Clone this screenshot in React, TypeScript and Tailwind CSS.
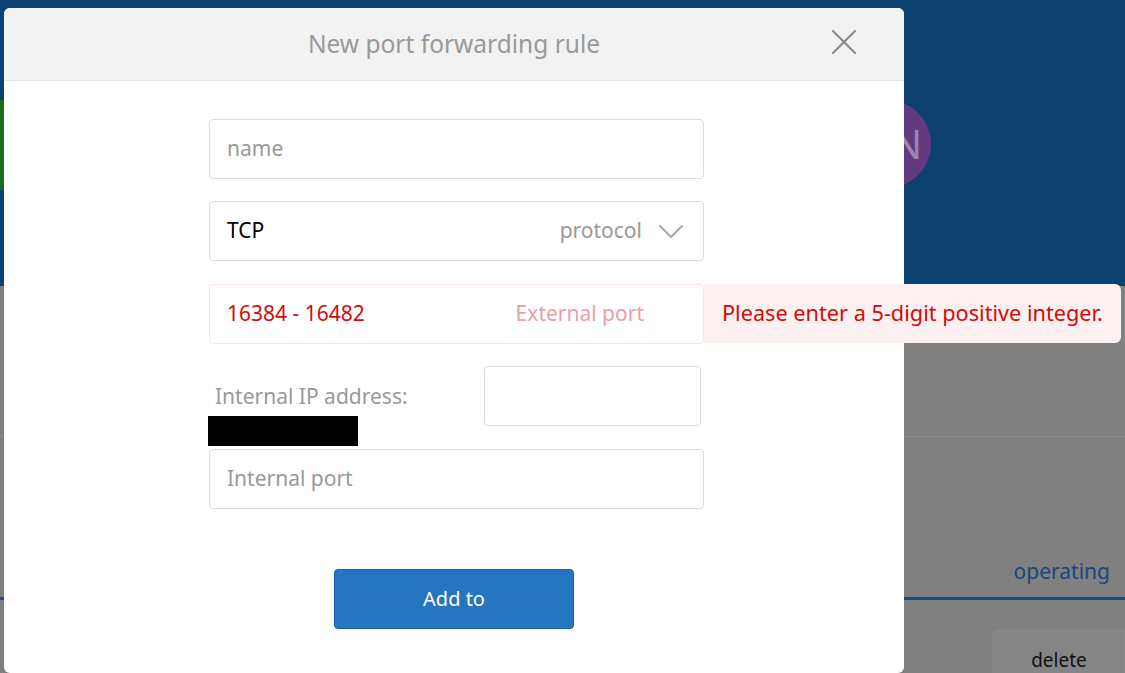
import { X } from 'lucide-react';

const font = { fontFamily: '"Noto Sans", "Open Sans", sans-serif' };

function Backdrop() {
   return (
      <div className="flex flex-col h-full">
         <div className="relative h-[286px] shrink-0 bg-[#0d4170]">
            <div className="absolute left-0 top-[100px] h-[90px] w-[40px] bg-[#1f6b1c]" />
            <div className="absolute left-[843px] top-[100px] size-[88px] rounded-full bg-[#643a7e] flex items-center justify-center">
               <span className="text-[40px] text-[#9c86ab] pl-[40px]">N</span>
            </div>
         </div>
         <div className="flex-1 bg-[#808080] flex flex-col">
            <div className="h-[151px] shrink-0 border-b border-[#8c8c8c]" />
            <div className="h-[163px] shrink-0 border-b-[3px] border-[#1b4f86] flex items-end justify-end pr-[15px] pb-[10px]">
               <span className="text-[21px] text-[#1d477a]">operating</span>
            </div>
            <div className="flex justify-end pt-[30px]">
               <div className="w-[132px] h-[60px] rounded-tl-[4px] border border-[#8a8a8a] bg-[#858585] flex items-start justify-center pt-[16px]">
                  <span className="text-[19px] leading-[26px] text-[#111]">delete</span>
               </div>
            </div>
         </div>
      </div>
   );
}

function Field({
   children,
   className = '',
}: {
   children: React.ReactNode;
   className?: string;
}) {
   return (
      <div
         className={`h-[60px] w-[495px] rounded-[4px] border flex items-center px-[17px] text-[21px] ${className}`}
      >
         {children}
      </div>
   );
}

function Modal() {
   return (
      <div className="absolute left-[4px] top-[8px] w-[900px] h-[665px] rounded-[6px] bg-white flex flex-col">
         <div className="relative h-[73px] shrink-0 rounded-t-[6px] bg-[#f2f2f2] border-b border-[#e4e4e4] flex items-center justify-center">
            <span className="text-[24.5px] text-[#999]">New port forwarding rule</span>
            <X
               className="absolute right-[38px] top-[12px] text-[#8a8a8a]"
               size={44}
               strokeWidth={1.2}
            />
         </div>
         <div className="flex flex-col pl-[205px] pt-[38px]">
            <Field className="border-[#dcdcdc] text-[#999]">name</Field>
            <Field className="mt-[22px] border-[#dcdcdc] justify-between pr-[19px]">
               <span className="text-black">TCP</span>
               <span className="flex items-center gap-[16px] text-[#999]">
                  protocol
                  <svg width="26" height="15" viewBox="0 0 26 15" fill="none">
                     <path d="M1.5 1.5 L13 13 L24.5 1.5" stroke="#aaa" strokeWidth="2.2" />
                  </svg>
               </span>
            </Field>
            <div className="relative mt-[23px]">
               <Field className="border-[#fde4e4] justify-between pr-[59px]">
                  <span className="text-[#d40b0b]">16384 - 16482</span>
                  <span className="text-[#e9a0a4]">External port</span>
               </Field>
               <div className="absolute left-[495px] top-0 h-[59px] w-[417px] rounded-r-[6px] bg-[#fdf0f0] flex items-center pl-[18px] text-[21.7px] text-[#d40b0b] whitespace-nowrap">
                  Please enter a 5-digit positive integer.
               </div>
            </div>
            <div className="mt-[22px] flex w-[495px]">
               <div className="flex flex-col w-[275px]">
                  <span className="pt-[17px] pl-[6px] text-[21px] text-[#999] leading-[26px]">
                     Internal IP address:
                  </span>
                  <div className="mt-[7px] h-[30px] w-[150px] -ml-[1px] bg-black" />
               </div>
               <div className="h-[60px] w-[217px] rounded-[4px] border border-[#dcdcdc]" />
            </div>
            <Field className="mt-[3px] border-[#dcdcdc] text-[#999]">Internal port</Field>
            <div className="mt-[60px] ml-[125px] h-[60px] w-[240px] rounded-[4px] border border-[#1a63ad] bg-[#2675c0] flex items-center justify-center text-[20px] text-white">
               Add to
            </div>
         </div>
      </div>
   );
}

export default function App() {
   return (
      <div className="relative w-[1125px] h-[673px] overflow-hidden" style={font}>
         <Backdrop />
         <Modal />
      </div>
   );
}
